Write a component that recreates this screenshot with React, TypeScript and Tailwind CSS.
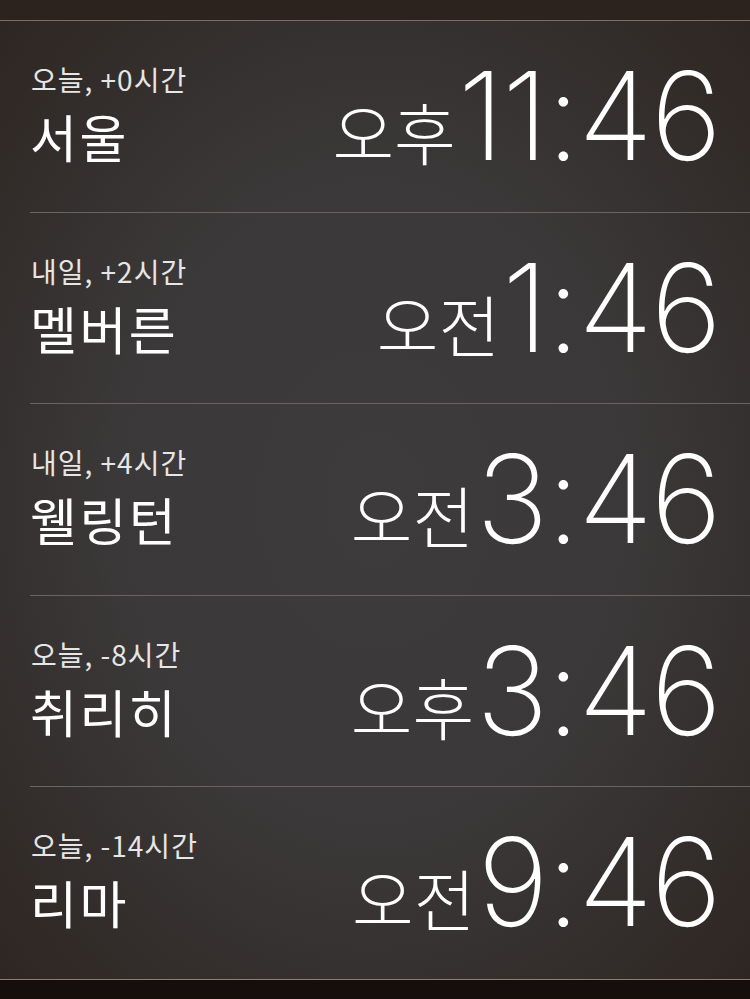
const clocks = [
  { day: '오늘, +0시간', city: '서울', ampm: '오후', time: '11:46' },
  { day: '내일, +2시간', city: '멜버른', ampm: '오전', time: '1:46' },
  { day: '내일, +4시간', city: '웰링턴', ampm: '오전', time: '3:46' },
  { day: '오늘, -8시간', city: '취리히', ampm: '오후', time: '3:46' },
  { day: '오늘, -14시간', city: '리마', ampm: '오전', time: '9:46' },
]

const ko = { fontFamily: '"Noto Sans CJK KR", "Noto Sans", sans-serif' }
const digits = { fontFamily: 'Inter, "Noto Sans CJK KR", sans-serif' }

export default function App() {
  return (
    <div className="w-[750px] h-[999px] overflow-hidden bg-[#150e0c] text-white">
      <div className="h-[21px] bg-[#2c221e] border-b border-[#7a6f68]" />
      <div className="h-[958px] bg-[radial-gradient(ellipse_at_center,#3d3b3b_0%,#3a3838_50%,#2e2622_100%)]">
        {clocks.map((c, i) => (
          <div
            key={c.city}
            className={`h-[191.6px] ml-[30px] flex items-start justify-between pr-[30px] ${
              i < clocks.length - 1 ? 'border-b border-[#686462]' : ''
            }`}
          >
            <div className="flex flex-col pt-[41px]" style={ko}>
              <span className="text-[28px] leading-[34px] text-[#e6e6e6] ml-[1px] tracking-[1px]">{c.day}</span>
              <span className="text-[51px] leading-[56px] mt-[12px] tracking-[2.5px]">{c.city}</span>
            </div>
            <div className="flex items-baseline leading-none pt-[34px]">
              <span className="text-[67px] font-light mr-[2px]" style={ko}>{c.ampm}</span>
              <span className="text-[122px] font-extralight tracking-[-2px]" style={digits}>{c.time}</span>
            </div>
          </div>
        ))}
      </div>
      <div className="border-t border-[#8a7e74]" />
    </div>
  )
}
